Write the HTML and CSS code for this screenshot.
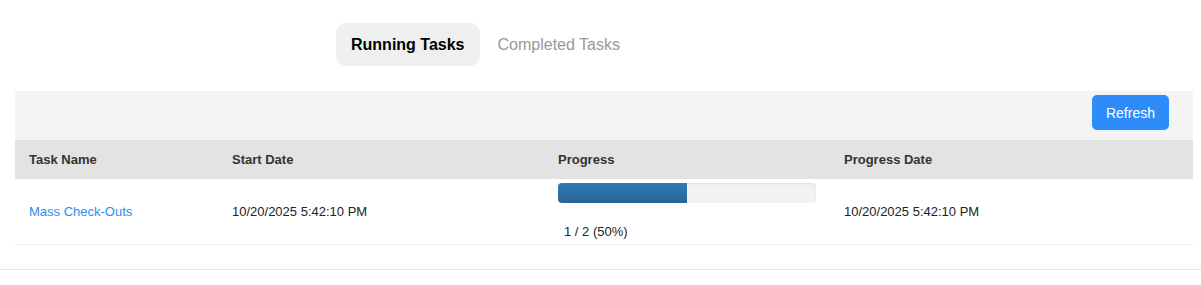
FILE: index.html
```html
<!DOCTYPE html>
<html lang="en">
<head>
    <meta charset="UTF-8">
    <title>Tasks</title>
    <link rel="stylesheet" href="styles.css">
</head>
<body>
    <!-- Tabs -->
    <div class="tabs">
        <a class="tab active" href="#">Running Tasks</a>
        <a class="tab" href="#">Completed Tasks</a>
    </div>

    <!-- Task list -->
    <div class="panel">
        <div class="toolbar">
            <button class="refresh-btn">Refresh</button>
        </div>
        <table class="tasks">
            <thead>
                <tr>
                    <th class="col-name">Task Name</th>
                    <th class="col-start">Start Date</th>
                    <th class="col-progress">Progress</th>
                    <th>Progress Date</th>
                </tr>
            </thead>
            <tbody>
                <tr>
                    <td><a href="#">Mass Check-Outs</a></td>
                    <td>10/20/2025 5:42:10 PM</td>
                    <td class="progress-cell">
                        <div class="progress">
                            <div class="progress-bar" style="width: 50%"></div>
                        </div>
                        <div class="progress-text">1 / 2 (50%)</div>
                    </td>
                    <td>10/20/2025 5:42:10 PM</td>
                </tr>
            </tbody>
        </table>
    </div>

    <div class="footer-line"></div>
</body>
</html>
```

FILE: styles.css
```css
/* Page */
body {
    margin: 0;
    padding: 0;
    background-color: #fff;
    color: #222;
    font-family: "Liberation Sans", Arial, sans-serif;
}

/* Tabs */
.tabs {
    display: flex;
    align-items: center;
    padding: 23px 0 0 336px;
    gap: 3px;
}

.tab {
    display: block;
    padding: 12px 15px;
    font-size: 16px;
    line-height: 19px;
    color: #999;
    text-decoration: none;
    border-radius: 10px;
}

.tab.active {
    background-color: #efefef;
    color: #000;
    font-weight: bold;
}

/* Panel */
.panel {
    margin: 25px 8px 0 15px;
}

.toolbar {
    display: flex;
    justify-content: flex-end;
    background-color: #f4f4f4;
    padding: 4px 24px 10px;
}

.refresh-btn {
    height: 35px;
    padding: 0 14px;
    font-family: "Liberation Sans", Arial, sans-serif;
    font-size: 14px;
    color: #fff;
    background-color: #2d8cf8;
    border: none;
    border-radius: 5px;
    cursor: pointer;
}

/* Table */
.tasks {
    width: 100%;
    border-collapse: collapse;
    table-layout: fixed;
    font-size: 12px;
}

.tasks th {
    text-align: left;
    background-color: #e3e3e3;
    color: #333;
    font-size: 13px;
    font-weight: bold;
    height: 39px;
    padding: 0 14px;
}

.col-name {
    width: 175px;
}

.col-start {
    width: 298px;
}

.col-progress {
    width: 258px;
}

.tasks td {
    padding: 4px 14px;
    height: 57px;
    font-size: 13px;
    border-bottom: 1px solid #eee;
    vertical-align: middle;
}

.tasks td a {
    color: #2d8cf0;
    text-decoration: none;
}

.tasks td.progress-cell {
    vertical-align: top;
}

.progress {
    height: 20px;
    width: 258px;
    background-color: #f2f2f2;
    border-radius: 4px;
    overflow: hidden;
    box-shadow: inset 0 1px 2px rgba(0, 0, 0, 0.08);
}

.progress-bar {
    height: 100%;
    background-image: linear-gradient(to bottom, #337ab7, #2a6496);
}

.progress-text {
    margin-top: 21px;
    padding-left: 6px;
    line-height: 16px;
}

.footer-line {
    margin-top: 24px;
    border-top: 1px solid #e8e8e8;
}
```
